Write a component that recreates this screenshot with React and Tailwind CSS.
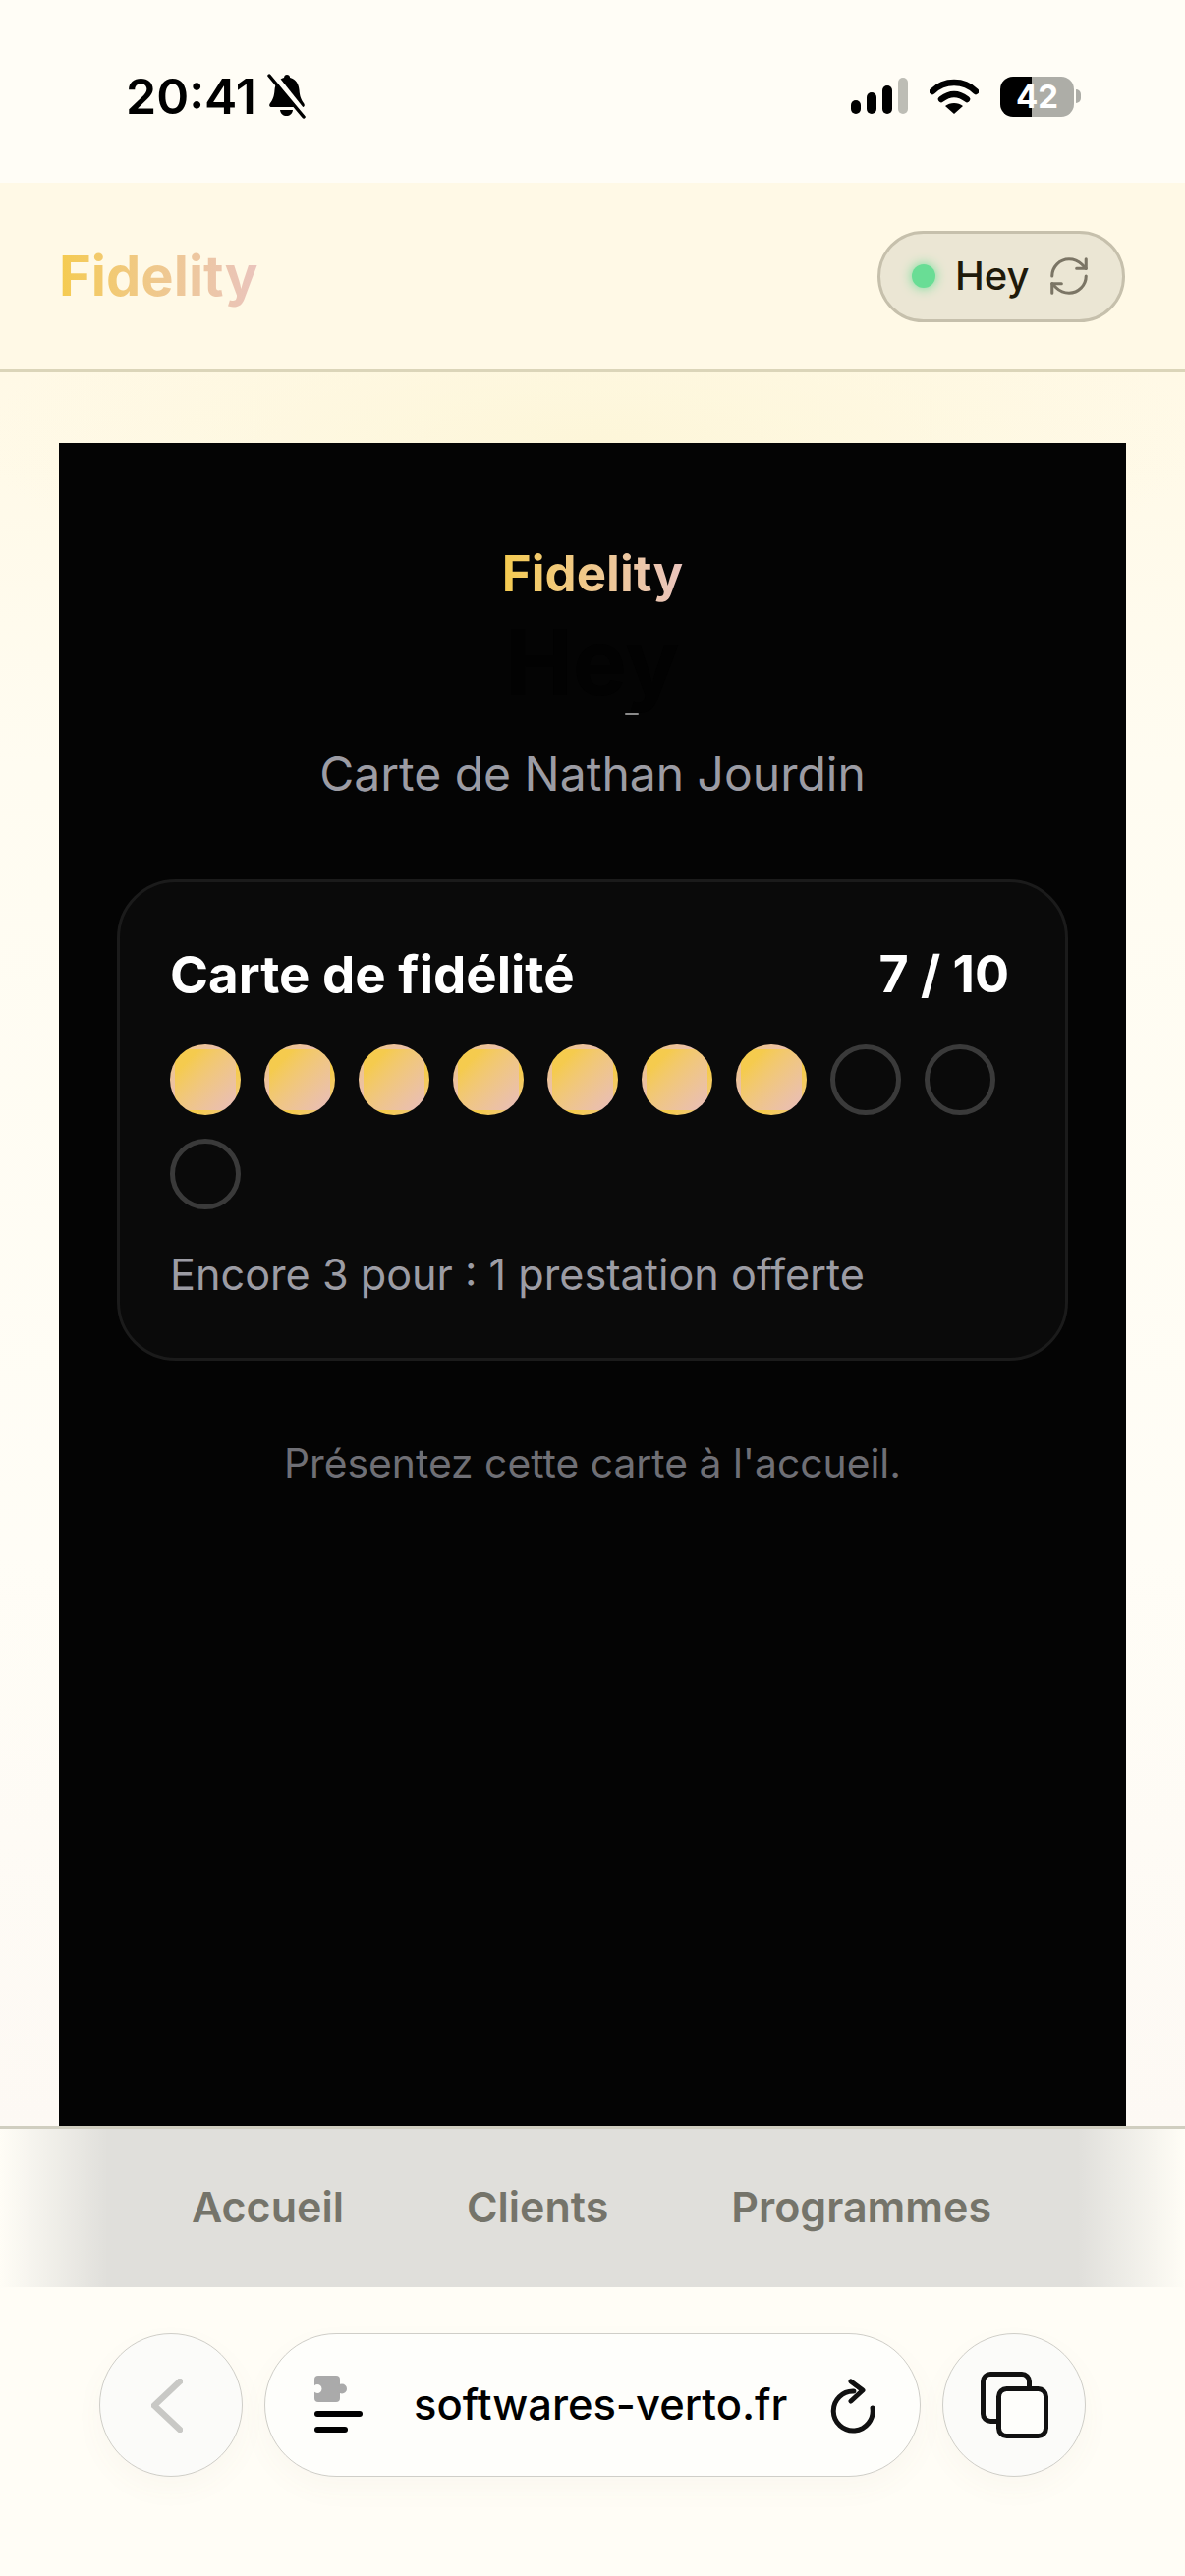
import { RefreshCw } from "lucide-react";

const sans = "font-['Inter','Liberation_Sans',sans-serif]";
const gradientText =
  "bg-gradient-to-r from-[#f5cb4e] to-[#eac4bd] bg-clip-text text-transparent";

const NAV_ITEMS = ["Accueil", "Clients", "Programmes"];
const STAMPS = [1, 2, 3, 4, 5, 6, 7, 8, 9, 10];

const BellOff = () => (
  <svg width="44" height="46" viewBox="0 0 44 46" className="ml-[8px]">
    <path d="M23 1c1.800 0 3 1.200 3.200 3 5.800 1.400 8.800 6.300 9.300 12.500.5 6.900 2 10 4.500 13.500 1.400 2 1 4-1.500 4H7.500C5 34 4.500 32 6 30c2.500-3.500 4-6.600 4.500-13.500C11 10.300 14.300 5.400 20 4c.2-1.800 1.300-3 3-3z" fill="#000" />
    <path d="M16 37h13c-.6 4-3.200 6-6.500 6s-5.900-2-6.500-6z" fill="#000" />
    <path d="M7 -1l35 44" stroke="#fffdf6" strokeWidth="7" />
    <path d="M5 2l35 42" stroke="#000" strokeWidth="3.500" strokeLinecap="round" />
  </svg>
);

const StatusBar = () => (
  <div className="flex h-[186px] shrink-0 items-center justify-between pt-[10px] pl-[128px] pr-[106px]">
    <div className="flex items-center">
      <span className={`${sans} text-[50px] font-semibold leading-none text-black`}>20:41</span>
      <BellOff />
    </div>
    <div className="flex items-center gap-[22px]">
      <svg width="58" height="38" viewBox="0 0 58 38">
        <rect x="0" y="23" width="10" height="14" rx="5" fill="#000" />
        <rect x="16" y="15" width="10" height="22" rx="5" fill="#000" />
        <rect x="32" y="8" width="10" height="29" rx="5" fill="#000" />
        <rect x="48" y="0" width="10" height="37" rx="5" fill="#bdbdb5" />
      </svg>
      <svg width="50" height="38" viewBox="0 0 50 38">
        <path d="M3 14C9 8 16 5 25 5s16 3 22 9M12 22c4-3 8-5 13-5s9 2 13 5" fill="none" stroke="#000" strokeWidth="6.500" strokeLinecap="round" />
        <path d="M25 37l-9-8c2.500-2 5.500-3 9-3s6.500 1 9 3z" fill="#000" />
      </svg>
      <div className="flex items-center">
        <div className="flex h-[41px] w-[75px] items-center justify-center overflow-hidden rounded-[13px] bg-[linear-gradient(90deg,#000_0,#000_43%,#adada7_43%,#adada7_100%)]">
          <span className={`${sans} text-[33px] font-bold leading-none text-white`}>42</span>
        </div>
        <div className="ml-[2px] h-[14px] w-[5px] rounded-r-full bg-[#adada7]" />
      </div>
    </div>
  </div>
);

const Header = () => (
  <header className="flex h-[193px] shrink-0 items-center justify-between border-b-[3px] border-[#dbd5b9] bg-[#fff9e6] pl-[60px] pr-[61px]">
    <span className={`${sans} ${gradientText} text-[56px] font-bold leading-tight`}>Fidelity</span>
    <div className="flex h-[93px] w-[252px] items-center rounded-full border-[3px] border-[#c6c0ac] bg-[#ebe6d4] pl-[32px]">
      <span className="h-[24px] w-[24px] shrink-0 rounded-full bg-[#69dd95] shadow-[0_0_12px_#69dd95]" />
      <span className={`${sans} ml-[20px] text-[40px] font-medium text-[#1f1a0a]`}>Hey</span>
      <RefreshCw size={46} strokeWidth={1.6} className="ml-[17px] shrink-0 text-[#7b7565]" />
    </div>
  </header>
);

const Stamp = ({ filled }) =>
  filled ? (
    <div className="h-[72px] w-[72px] rounded-full border-[5px] border-transparent bg-gradient-to-br from-[#f5cb4e] from-20% to-[#e9bdb9]" />
  ) : (
    <div className="h-[72px] w-[72px] rounded-full border-[5px] border-[#3a3a3a]" />
  );

const LoyaltyCard = () => (
  <div className={`${sans} mx-[59px] mt-[77px] rounded-[60px] border-[3px] border-[#1b1b1b] bg-[#0a0a0a] px-[51px] pt-[59px] pb-[52px] text-left`}>
    <div className="flex items-center justify-between pr-[6px]">
      <span className="text-[52.800px] font-bold leading-[70px] text-white">Carte de fidélité</span>
      <span className="text-[52px] font-bold leading-[70px] text-white">7 / 10</span>
    </div>
    <div className="mt-[36px] flex flex-wrap gap-[24px]">
      {STAMPS.map((n) => (
        <Stamp key={n} filled={n <= 7} />
      ))}
    </div>
    <p className="mt-[33px] text-[43.200px] leading-[66px] text-[#9c9ca4]">Encore 3 pour : 1 prestation offerte</p>
  </div>
);

const Main = () => (
  <main className="flex min-h-0 flex-1 flex-col bg-[radial-gradient(ellipse_620px_170px_at_50%_70px,#fdf6d9,transparent),linear-gradient(180deg,#fff9e6_0,#fffcf1_400px,#fffdf6_1200px,#fdf9f4_100%)] px-[60px] pt-[72px]">
    <div className={`${sans} flex-1 bg-[#040404] pt-[104px] text-center`}>
      <div className={`${gradientText} mx-auto w-fit text-[51px] font-bold leading-[58px]`}>Fidelity</div>
      <div className="relative mt-[15px] mb-[38px] h-[92px] text-[92px] font-bold leading-[92px] text-[#020202]">
        Hey
        <div className="absolute top-[98px] left-1/2 ml-[33px] h-[2px] w-[14px] rounded-full bg-[#8a8a8a]" />
      </div>
      <p className="text-[48px] leading-[60px] text-[#9c9ca4]">Carte de Nathan Jourdin</p>
      <LoyaltyCard />
      <p className="mt-[79px] text-[40.800px] leading-[50px] text-[#6f6f75]">Présentez cette carte à l'accueil.</p>
    </div>
  </main>
);

const BottomNav = () => (
  <nav className="relative flex h-[164px] shrink-0 items-center justify-center gap-[125px] border-t-[3px] border-[#d0cec0] bg-[#e0dfdb] pb-[2px] pr-[2px] text-[43px]">
    <div className="absolute inset-y-0 left-0 w-[110px] bg-gradient-to-r from-[#fffdf6] to-transparent" />
    <div className="absolute inset-y-0 right-0 w-[110px] bg-gradient-to-l from-[#fffdf6] to-transparent" />
    {NAV_ITEMS.map((item) => (
      <span key={item} className={`${sans} font-semibold text-[#75746a]`}>{item}</span>
    ))}
  </nav>
);

const BrowserBar = () => (
  <div className="flex h-[294px] shrink-0 items-start justify-center gap-[22px] bg-[#fffdf6] pt-[47px]">
    <button className="flex h-[146px] w-[146px] items-center justify-center rounded-full border-[1.5px] border-[#cfcec8] bg-[#fbfbf9] shadow-[0_12px_30px_rgba(120,110,70,0.04)]">
      <svg width="32" height="55" viewBox="0 0 32 55" className="mr-[8px]">
        <path d="M29 3L3 27.500 29 52" fill="none" stroke="#c8c8c5" strokeWidth="6.500" strokeLinecap="round" strokeLinejoin="round" />
      </svg>
    </button>
    <div className="flex h-[146px] w-[668px] items-center rounded-full border-[1.5px] border-[#cfcec8] bg-[#fefefb] pl-[50px] shadow-[0_12px_30px_rgba(120,110,70,0.04)]">
      <svg width="49" height="61" viewBox="0 0 49 61" className="shrink-0">
        <rect x="0" y="0" width="26" height="27" rx="4" fill="#aaaaaa" />
        <circle cx="28" cy="13.500" r="5" fill="#aaaaaa" />
        <circle cx="3" cy="13.500" r="4.500" fill="#fefefb" />
        <rect x="0" y="36" width="49" height="6" rx="3" fill="#000" />
        <rect x="0" y="52" width="34" height="6" rx="3" fill="#000" />
      </svg>
      <span className={`${sans} ml-[52px] text-[43.500px] font-medium leading-none text-black`}>softwares-verto.fr</span>
      <svg width="46" height="56" viewBox="0 0 46 56" className="ml-[44px] mt-[2px]">
        <path d="M24 13A20 20 0 1 0 43 30" fill="none" stroke="#111" strokeWidth="5" strokeLinecap="round" />
        <path d="M21 3l12 9-12 11" fill="none" stroke="#111" strokeWidth="5" strokeLinecap="round" strokeLinejoin="round" />
      </svg>
    </div>
    <button className="flex h-[146px] w-[146px] items-center justify-center rounded-full border-[1.5px] border-[#cfcec8] bg-[#fbfbf9] shadow-[0_12px_30px_rgba(120,110,70,0.04)]">
      <svg width="69" height="68" viewBox="0 0 69 68">
        <path d="M16 50.500H10A7.500 7.500 0 0 1 2.500 43V10A7.500 7.500 0 0 1 10 2.500H42A7.500 7.500 0 0 1 49.500 10V15" fill="none" stroke="#111" strokeWidth="5" />
        <rect x="18.500" y="17.500" width="48" height="48" rx="8" fill="#fefefb" stroke="#111" strokeWidth="5" />
      </svg>
    </button>
  </div>
);

const App = () => (
  <div className="flex h-[2622px] w-[1206px] flex-col overflow-hidden bg-[#fffdf6]">
    <StatusBar />
    <Header />
    <Main />
    <BottomNav />
    <BrowserBar />
  </div>
);

export default App;
